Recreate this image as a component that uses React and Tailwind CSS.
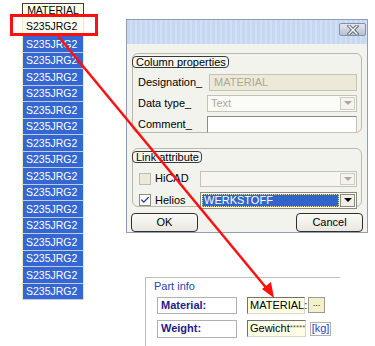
import { Check } from 'lucide-react';

const FONT = "font-['Liberation_Sans',Arial,sans-serif]";

function ColumnList() {
    const rows = Array.from({ length: 16 });
    return (
        <div className="mt-[3px] ml-[22px] w-[62px] flex flex-col text-[10.5px] leading-none">
            <div className="h-[14px] border border-[#3c3c3c] bg-[#ffffe1] flex items-center justify-center text-black">
                MATERIAL
            </div>
            <div className="h-[19px] bg-[#fffff4] border-x border-[#ecebc4] flex items-center pl-[3px] text-black">
                S235JRG2
            </div>
            {rows.map((_, i) => (
                <div
                    key={i}
                    className="h-[16.5px] bg-[#3567d3] border-x border-[#ecebc4] border-b border-b-[#c3cbe0] flex items-center pl-[3px] text-white"
                >
                    S235JRG2
                </div>
            ))}
        </div>
    );
}

function GroupBox({ title, className, children }) {
    return (
        <div className={`border border-[#b9b9ad] rounded-[6px] ${className}`}>
            <div className="-mt-[6px] -ml-px inline-block h-[12px] border border-[#3a3a3a] rounded-[4px] bg-[#f7f7f3] pl-[3px] pr-[2px] leading-[10px] text-black">
                {title}
            </div>
            {children}
        </div>
    );
}

function DropArrow({ disabled }) {
    return (
        <div className={`w-[15px] h-full flex items-center justify-center border ${disabled ? 'border-[#cfcdc2] bg-[#f4f3ee]' : 'border-[#8d8a7c] bg-[#f0efe8]'}`}>
            <div className={`w-0 h-0 border-x-[4px] border-x-transparent border-t-[4px] ${disabled ? 'border-t-[#aca899]' : 'border-t-black'}`} />
        </div>
    );
}

function Dialog() {
    return (
        <div className="w-[242px] h-[214px] border border-[#8f9db5] bg-[#f3f3ee] flex flex-col text-[11px]">
            {/* title bar */}
            <div className="h-[24px] bg-[repeating-linear-gradient(90deg,#c6d7f1_0px,#c6d7f1_3px,#d2e0f5_3px,#d2e0f5_5px)] flex justify-end pt-[3px] pr-[1px]">
                <div className="w-[27px] h-[13px] rounded-[2px] border border-[#8492a8] bg-[linear-gradient(#e2e6ee,#b9c1cf)] flex items-center justify-center">
                    <svg width="12" height="10" viewBox="0 0 12 10">
                        <path d="M2 1 L10 9 M10 1 L2 9" stroke="#5a6478" strokeWidth="3.2" strokeLinecap="square" />
                        <path d="M2 1 L10 9 M10 1 L2 9" stroke="#ffffff" strokeWidth="1.4" strokeLinecap="square" />
                    </svg>
                </div>
            </div>

            <div className="flex-1 px-[5px] pt-[9px]">
                <GroupBox title="Column properties" className="h-[80px]">
                    <div className="flex flex-col gap-[4px] mt-[3px] pl-[5px] pr-[4px]">
                        <div className="flex items-center justify-between h-[17px]">
                            <span>Designation_</span>
                            <div className="w-[148px] h-[17px] border border-[#c6c3b5] bg-[#ece9d8] text-[#aca899] pl-[4px] flex items-center">
                                MATERIAL
                            </div>
                        </div>
                        <div className="flex items-center justify-between h-[17px]">
                            <span>Data type_</span>
                            <div className="w-[150px] h-[17px] border border-[#c6c3b5] bg-[#fbfbf8] text-[#aca899] flex items-center justify-between p-px pl-[3px]">
                                <span>Text</span>
                                <DropArrow disabled />
                            </div>
                        </div>
                        <div className="flex items-center justify-between h-[17px]">
                            <span>Comment_</span>
                            <div className="w-[150px] h-[17px] border border-[#c6c3b5] border-t-[#8e8b7d] border-l-[#8e8b7d] bg-white" />
                        </div>
                    </div>
                </GroupBox>

                <GroupBox title="Link attribute" className="mt-[15px] h-[59px]">
                    <div className="flex flex-col gap-[5px] mt-[5px] pl-[6px] pr-[4px]">
                        <div className="flex items-center h-[16px]">
                            <div className="w-[12px] h-[12px] border border-[#c0bdb0] bg-[#ece9d8]" />
                            <span className="ml-[4px] w-[45px] text-black">HiCAD</span>
                            <div className="flex-1 h-[16px] border border-[#c6c3b5] bg-[#f6f5f0] flex justify-end p-px">
                                <DropArrow disabled />
                            </div>
                        </div>
                        <div className="flex items-center h-[17px]">
                            <div className="w-[12px] h-[12px] border border-[#8e8b7d] bg-white flex items-center justify-center">
                                <Check className="w-[10px] h-[10px] text-[#2134a6]" strokeWidth={3} />
                            </div>
                            <span className="ml-[4px] w-[45px] text-black">Helios</span>
                            <div className="flex-1 h-[17px] border border-[#8e8b7d] bg-white flex p-px gap-px">
                                <div className="flex-1 bg-[#3166c8] outline-1 outline-dotted outline-[#f0e080] -outline-offset-1 text-white pl-[2px] flex items-center">
                                    WERKSTOFF
                                </div>
                                <DropArrow />
                            </div>
                        </div>
                    </div>
                </GroupBox>

                <div className="flex justify-between mt-[6px]">
                    <button className="w-[67px] h-[19px] rounded-[4px] border border-[#2f2f2f] bg-[linear-gradient(#fafaf7,#e8e7df)] text-black -ml-[1px]">OK</button>
                    <button className="w-[67px] h-[19px] rounded-[4px] border border-[#2f2f2f] bg-[linear-gradient(#fafaf7,#e8e7df)] text-black -mr-[1px]">Cancel</button>
                </div>
            </div>
        </div>
    );
}

function PartInfo() {
    return (
        <div className="mt-[44px] ml-[19px] w-[195px] border-t border-l border-[#bdbdbd] text-[11px]">
            <div className="-mt-[7px] ml-[7px] inline-block bg-white px-px leading-[13px] text-[#2a44b0]">Part info</div>
            <div className="flex flex-col gap-[6px] mt-[2px] pl-[11px]">
                <div className="flex items-center">
                    <div className="w-[80px] h-[17px] border border-[#b0b0b0] font-bold text-[#1c1c8a] pl-[3px] flex items-center">Material:</div>
                    <div className="ml-[10px] w-[58px] h-[17px] border border-[#d8d8c8] border-t-[#707070] border-l-[#707070] bg-[#ffffe8] pl-[2px] flex items-center">MATERIAL:</div>
                    <div className="ml-[3px] w-[17px] h-[16px] border border-[#9a9a90] bg-[#f3f1cc] flex items-center justify-center text-[9px] leading-none pb-[3px]">...</div>
                </div>
                <div className="flex items-center">
                    <div className="w-[80px] h-[18px] border border-[#b0b0b0] font-bold text-[#1c1c8a] pl-[3px] flex items-center">Weight:</div>
                    <div className="ml-[10px] w-[59px] h-[17px] border border-[#d8d8c8] border-t-[#707070] border-l-[#707070] bg-[#ffffe8] pl-[2px] flex items-center whitespace-nowrap overflow-hidden">
                        Gewicht<span className="text-[8px] text-[#555] self-start mt-[1px]">*****</span>
                    </div>
                    <div className="ml-[4px] w-[21px] h-[14px] border border-[#b0b0b0] text-[#2a44c0] flex items-center justify-center">[kg]</div>
                </div>
                <div className="h-[4px]" />
            </div>
        </div>
    );
}

export default function App() {
    return (
        <div className={`relative w-[375px] h-[346px] bg-white overflow-hidden ${FONT}`}>
            <div className="flex">
                <ColumnList />
                <div className="ml-[42px] mt-[19px] flex flex-col">
                    <Dialog />
                    <PartInfo />
                </div>
            </div>

            {/* red highlight box over the first row */}
            <div className="absolute left-[10px] top-[14px] w-[88px] h-[22px] border-[3px] border-[#ff1010]" />

            {/* red arrow */}
            <svg className="absolute inset-0 pointer-events-none" width="375" height="346" viewBox="0 0 375 346">
                <line x1="58" y1="36" x2="268" y2="290" stroke="#ff1010" strokeWidth="2.5" />
                <polygon points="274,298 262,289 271,282" fill="#ff1010" />
            </svg>
        </div>
    );
}
